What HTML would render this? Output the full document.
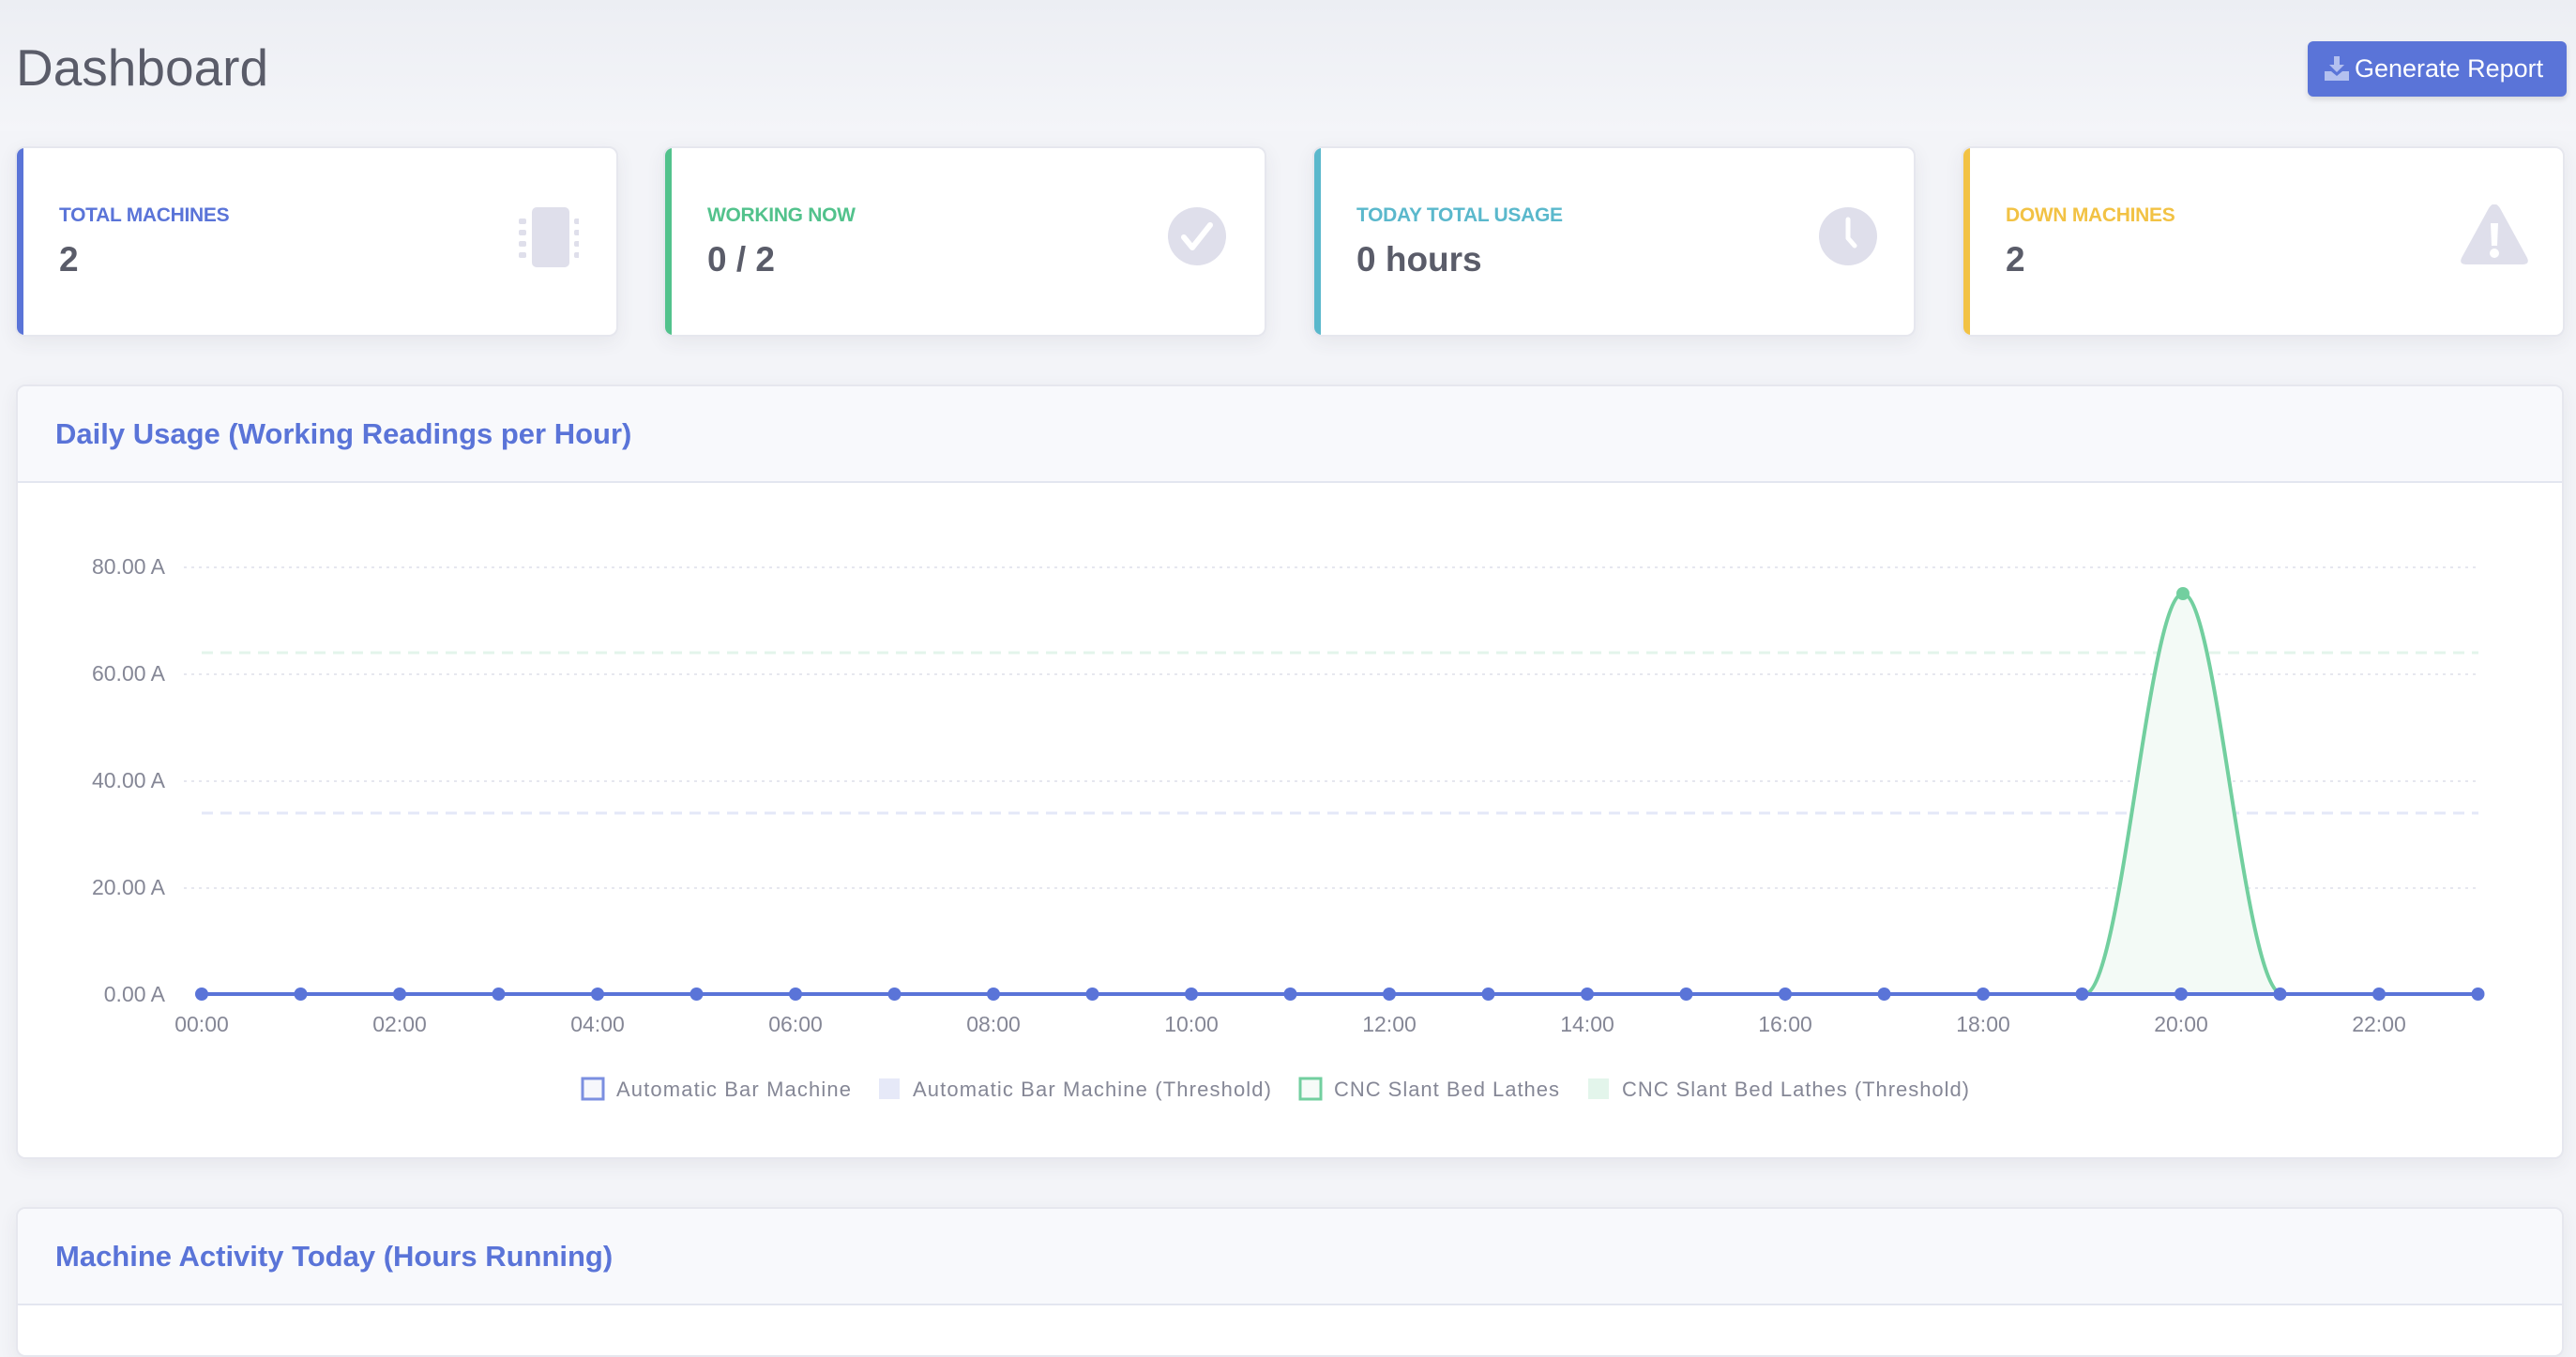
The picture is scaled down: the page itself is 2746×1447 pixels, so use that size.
<!DOCTYPE html>
<html><head><meta charset="utf-8">
<style>
*{box-sizing:border-box;margin:0;padding:0}
body{width:2746px;height:1420px;background:#f3f4f8;font-family:"Liberation Sans",sans-serif;position:relative;overflow:hidden}
.top{position:absolute;left:0;top:0;width:2746px;height:140px;background:linear-gradient(#eceef3,#f4f5f9)}
h1{position:absolute;left:17px;top:40px;font-size:55px;font-weight:400;color:#5a5c69}
.btn{position:absolute;left:2460px;top:44px;width:276px;height:59px;background:#5a74d8;border-radius:6px;color:#fff;font-size:27px;line-height:59px;padding-left:50px;box-shadow:0 3px 6px rgba(0,0,0,.12)}
.btn svg{position:absolute;left:18px;top:16px}
.card{position:absolute;top:156px;height:203px;width:643px;background:#fff;border-radius:10px;border:2px solid #e6e7ee;box-shadow:0 6px 20px rgba(58,59,69,.07);overflow:hidden}
.card .bar{position:absolute;left:0;top:0;bottom:0;width:7px}
.card .lbl{position:absolute;left:45px;top:60px;font-size:21px;font-weight:bold;letter-spacing:-0.3px}
.card .val{position:absolute;left:45px;top:98px;font-size:37px;font-weight:bold;color:#5a5c69}
.card svg{position:absolute;right:40px;top:62px}
.panel{position:absolute;left:17px;width:2716px;background:#fff;border:2px solid #e6e7ee;border-radius:10px;box-shadow:0 6px 20px rgba(58,59,69,.07);overflow:hidden}
.ph{height:103px;background:#f8f9fc;border-bottom:2px solid #e3e6f0;font-size:31px;font-weight:bold;padding:33px 0 0 40px;color:#5a74d8}
</style></head><body>
<div class="top"></div>
<h1>Dashboard</h1>
<div class="btn"><svg width="26" height="26" viewBox="0 0 26 26"><path d="M10 0h6v9h5l-8 8-8-8h5z" fill="#b3c0ef"/><path d="M0 16h7l6 5 6-5h7v10H0z" fill="#b3c0ef"/></svg>Generate Report</div>

<div class="card" style="left:16px"><div class="bar" style="background:#5a74d8"></div><div class="lbl" style="color:#5a74d8">TOTAL MACHINES</div><div class="val">2</div>
<svg width="66" height="66" viewBox="0 0 66 66"><rect x="16" y="1" width="40" height="64" rx="5" fill="#dfdfeb"/><g fill="#dfdfeb"><rect x="2" y="13" width="8" height="6" rx="2"/><rect x="2" y="25" width="8" height="6" rx="2"/><rect x="2" y="37" width="8" height="6" rx="2"/><rect x="2" y="49" width="8" height="6" rx="2"/><rect x="61" y="13" width="7" height="6" rx="2"/><rect x="61" y="25" width="7" height="6" rx="2"/><rect x="61" y="37" width="7" height="6" rx="2"/><rect x="61" y="49" width="7" height="6" rx="2"/></g></svg></div>

<div class="card" style="left:707px"><div class="bar" style="background:#52c28c"></div><div class="lbl" style="color:#52c28c">WORKING NOW</div><div class="val">0 / 2</div>
<svg width="64" height="64" viewBox="0 0 64 64" style="right:40px"><circle cx="32" cy="32" r="31" fill="#dfdfeb"/><path d="M18 33l9 11 19-24" stroke="#fff" stroke-width="6" fill="none" stroke-linecap="round" stroke-linejoin="round"/></svg></div>

<div class="card" style="left:1399px"><div class="bar" style="background:#5ab8cc"></div><div class="lbl" style="color:#5ab8cc">TODAY TOTAL USAGE</div><div class="val">0 hours</div>
<svg width="64" height="64" viewBox="0 0 64 64" style="right:38px"><circle cx="32" cy="32" r="31" fill="#dfdfeb"/><path d="M32 14v20l7 8" stroke="#fff" stroke-width="5" fill="none" stroke-linecap="round" stroke-linejoin="round"/></svg></div>

<div class="card" style="left:2091px"><div class="bar" style="background:#f2c244"></div><div class="lbl" style="color:#f2c244">DOWN MACHINES</div><div class="val">2</div>
<svg width="74" height="66" viewBox="0 0 74 66" style="right:36px;top:60px"><path d="M31 4q6-9 12 0l29 53q3 7-5 7H7q-8 0-5-7z" fill="#dfdfeb"/><path d="M33 20h8l-1 24h-6z" fill="#fff"/><circle cx="37" cy="52" r="5" fill="#fff"/></svg></div>

<div class="panel" style="top:410px;height:826px"><div class="ph">Daily Usage (Working Readings per Hour)</div></div>
<div class="panel" style="top:1287px;height:160px"><div class="ph">Machine Activity Today (Hours Running)</div></div>

<svg width="2746" height="1420" style="position:absolute;left:0;top:0" font-family="Liberation Sans, sans-serif">
<g stroke="#e6e7ef" stroke-width="2" stroke-dasharray="3 5">
<line x1="196" y1="605" x2="2642" y2="605"/><line x1="196" y1="719" x2="2642" y2="719"/><line x1="196" y1="833" x2="2642" y2="833"/><line x1="196" y1="947" x2="2642" y2="947"/>
</g>
<line x1="215" y1="696" x2="2642" y2="696" stroke="#e3f5eb" stroke-width="3" stroke-dasharray="12 8"/>
<line x1="215" y1="867" x2="2642" y2="867" stroke="#e4e8f8" stroke-width="3" stroke-dasharray="12 8"/>
<g font-size="23" fill="#858796" text-anchor="end">
<text x="176" y="612">80.00 A</text><text x="176" y="726">60.00 A</text><text x="176" y="840">40.00 A</text><text x="176" y="954">20.00 A</text><text x="176" y="1068">0.00 A</text>
</g>
<path d="M2222,1060 C2262,1060 2290,633 2327,633 C2364,633 2392,1060 2433,1060 Z" fill="#f3faf6"/>
<path d="M2222,1060 C2262,1060 2290,633 2327,633 C2364,633 2392,1060 2433,1060" fill="none" stroke="#72cf9f" stroke-width="4"/>
<line x1="215" y1="1060" x2="2642" y2="1060" stroke="#5a74d8" stroke-width="4"/>
<circle cx="2327" cy="633" r="7" fill="#72cf9f"/>
<g fill="#5a74d8" id="pts"></g>
<g font-size="23" fill="#858796" text-anchor="middle" id="xl"></g>
<g font-size="22" fill="#858796">
<rect x="621" y="1150" width="22" height="22" fill="#f6f7fc" stroke="#7b8fe0" stroke-width="3"/><text x="657" y="1169" textLength="250">Automatic Bar Machine</text>
<rect x="937" y="1150" width="22" height="22" fill="#e6e9f8"/><text x="973" y="1169" textLength="382">Automatic Bar Machine (Threshold)</text>
<rect x="1386" y="1150" width="22" height="22" fill="#f6fbf8" stroke="#72cf9f" stroke-width="3"/><text x="1422" y="1169" textLength="240">CNC Slant Bed Lathes</text>
<rect x="1693" y="1150" width="22" height="22" fill="#e3f5eb"/><text x="1729" y="1169" textLength="370">CNC Slant Bed Lathes (Threshold)</text>
</g>
</svg>
<script>
var p=document.getElementById('pts'),x=document.getElementById('xl'),ns='http://www.w3.org/2000/svg';
for(var i=0;i<24;i++){var cx=215+i*105.5;var c=document.createElementNS(ns,'circle');c.setAttribute('cx',cx);c.setAttribute('cy',1060);c.setAttribute('r',7);p.appendChild(c);
if(i%2==0){var t=document.createElementNS(ns,'text');t.setAttribute('x',cx);t.setAttribute('y',1100);t.textContent=(i<10?'0':'')+i+':00';x.appendChild(t);}}
</script>
</body></html>
